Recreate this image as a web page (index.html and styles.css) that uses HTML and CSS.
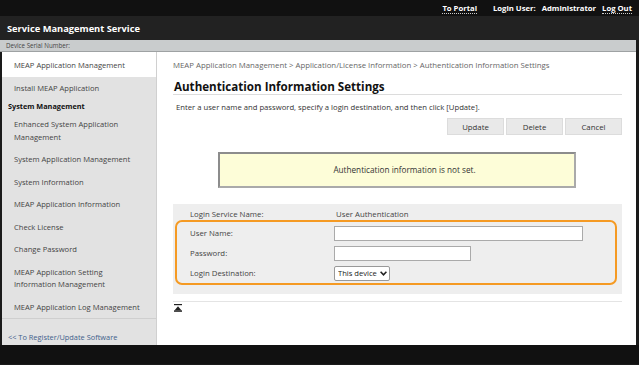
FILE: index.html
```html
<!DOCTYPE html>
<html lang="en">
<head>
<meta charset="UTF-8">
<title>Authentication Information Settings</title>
<link rel="stylesheet" href="styles.css">
</head>
<body>
<div class="top-bar">
    <a href="#" class="top-link">To Portal</a>
    <span class="login-user">Login User:</span>
    <span class="login-name">Administrator</span>
    <a href="#" class="top-link">Log Out</a>
</div>
<div class="title-bar">Service Management Service</div>
<div class="serial-bar">Device Serial Number:</div>
<div class="page">
    <nav class="side">
        <a href="#" class="side-item current">MEAP Application Management</a>
        <a href="#" class="side-item">Install MEAP Application</a>
        <div class="side-head">System Management</div>
        <a href="#" class="side-item">Enhanced System Application<br>Management</a>
        <a href="#" class="side-item">System Application Management</a>
        <a href="#" class="side-item">System Information</a>
        <a href="#" class="side-item">MEAP Application Information</a>
        <a href="#" class="side-item">Check License</a>
        <a href="#" class="side-item">Change Password</a>
        <a href="#" class="side-item">MEAP Application Setting<br>Information Management</a>
        <a href="#" class="side-item last">MEAP Application Log Management</a>
        <a href="#" class="side-register">&lt;&lt; To Register/Update Software</a>
    </nav>
    <main class="content">
        <div class="crumbs">MEAP Application Management &gt; Application/License Information &gt; Authentication Information Settings</div>
        <h1 class="heading">Authentication Information Settings</h1>
        <p class="desc">Enter a user name and password, specify a login destination, and then click [Update].</p>
        <div class="actions">
            <button type="button" class="btn">Update</button>
            <button type="button" class="btn">Delete</button>
            <button type="button" class="btn">Cancel</button>
        </div>
        <div class="notice">Authentication information is not set.</div>
        <div class="panel">
            <div class="row service">
                <span class="label">Login Service Name:</span>
                <span class="value">User Authentication</span>
            </div>
            <div class="highlight">
                <div class="row">
                    <label class="label" for="user-name">User Name:</label>
                    <input type="text" id="user-name" class="field wide">
                </div>
                <div class="row">
                    <label class="label" for="password">Password:</label>
                    <input type="password" id="password" class="field short">
                </div>
                <div class="row">
                    <label class="label" for="dest">Login Destination:</label>
                    <span class="select-wrap">
                        <select id="dest" class="select">
                            <option>This device</option>
                        </select>
                        <svg class="chev" width="7" height="5" viewBox="0 0 7 5"><path d="M0.6 0.8 L3.5 3.8 L6.4 0.8" fill="none" stroke="#222" stroke-width="1.6"/></svg>
                    </span>
                </div>
            </div>
        </div>
        <div class="page-top">
            <a href="#" class="to-top" title="Top">
                <svg width="8" height="8" viewBox="0 0 8 8"><rect x="0" y="0" width="8" height="1.2" fill="#222"/><path d="M4 2.2 L7.6 6.4 L0.4 6.4 Z" fill="#222"/><rect x="0" y="6.4" width="8" height="1.4" fill="#222"/></svg>
            </a>
        </div>
    </main>
</div>
<div class="footer"></div>
</body>
</html>
```

FILE: styles.css
```css
body {
    margin: 0;
    background: #1a1a1a;
    font-family: "Open Sans", "Noto Sans", Arial, sans-serif;
    color: #333;
}
a { color: inherit; text-decoration: none; }

.top-bar {
    height: 16px;
    background: #111;
    display: flex;
    justify-content: flex-end;
    align-items: center;
    gap: 6px;
    padding-right: 7px;
    color: #fff;
    font-size: 7.7px;
    font-weight: bold;
}
.top-link { border-bottom: 1px dotted #ccc; line-height: 10px; }
.login-user { margin-left: 10px; }

.title-bar {
    height: 24px;
    line-height: 26px;
    background: #222;
    color: #fff;
    font-size: 9.3px;
    font-weight: bold;
    padding-left: 7px;
}
.serial-bar {
    height: 11px;
    line-height: 12px;
    background: #c9cccd;
    border-bottom: 1px solid #9ea2a3;
    font-size: 6.2px;
    color: #444;
    padding-left: 6px;
    margin-right: 3px;
}

.page {
    display: flex;
    height: 293px;
    margin: 0 3px 0 2px;
    background: #fff;
}

.side {
    width: 154px;
    background: #e2e2e2;
    border-right: 1px solid #d0d0d0;
    display: flex;
    flex-direction: column;
    font-size: 7.6px;
    color: #444;
}
.side-item {
    padding: 5px 8px 5px 12px;
    line-height: 12.5px;
}
.side-item.current { background: #fff; padding-top: 7px; }
.side-item.last { border-bottom: 1px solid #cfcfcf; }
.side-head {
    padding: 0 6px;
    height: 14px;
    line-height: 14px;
    font-weight: bold;
    color: #111;
    font-size: 7.3px;
}
.side-register {
    margin-top: 13px;
    padding-left: 6px;
    color: #3f5f8c;
    font-size: 7.4px;
}

.content {
    flex: 1;
    padding: 8px 14px 0 16px;
    font-size: 7.8px;
}
.crumbs {
    color: #666;
    line-height: 11px;
}
.heading {
    margin: 6px 0 0 0;
    padding: 2px 0 0 1px;
    font-size: 11.6px;
    font-weight: bold;
    color: #111;
    line-height: 15px;
    border-bottom: 1px solid #dcdcdc;
}
.desc {
    margin: 7px 0 0 3px;
    line-height: 11px;
    font-size: 7.7px;
    color: #333;
}
.actions {
    display: flex;
    justify-content: flex-end;
    gap: 2px;
    margin-top: 5px;
}
.btn {
    width: 57px;
    height: 17px;
    background: #e9e9e9;
    border: 1px solid #dcdcdc;
    font-family: inherit;
    font-size: 7.8px;
    color: #333;
    padding: 0;
}
.notice {
    margin: 17px 46px 0 45px;
    height: 32px;
    line-height: 32px;
    padding-left: 15px;
    text-align: center;
    background: #fdfdd8;
    border: 2px solid #8c8c8c;
    border-right-color: #aaa;
    border-bottom-color: #aaa;
    font-size: 8.2px;
    color: #333;
}
.panel {
    margin-top: 16px;
    background: #eee;
    padding: 3px 5px 9px 2px;
}
.row {
    display: flex;
    align-items: center;
    height: 20px;
}
.row .label {
    width: 146px;
    padding-left: 15px;
    color: #444;
}
.row.service { height: 13px; }
.row.service .value { color: #444; }
.highlight {
    border: 2px solid #f59a23;
    border-radius: 7px;
    padding-top: 1px;
}
.highlight .row .label { width: 144px; padding-left: 13px; }
.field {
    height: 15px;
    box-sizing: border-box;
    border: 1px solid #aaa;
    background: #fff;
    padding: 0 3px;
    font-family: inherit;
    font-size: 7.6px;
}
.field.wide { width: 249px; }
.field.short { width: 137px; }
.select-wrap {
    position: relative;
    display: inline-block;
}
.select {
    appearance: none;
    -webkit-appearance: none;
    width: 56px;
    height: 15px;
    border: 1px solid #999;
    border-radius: 2px;
    background: #fff;
    font-family: inherit;
    font-size: 7.6px;
    color: #222;
    padding: 0 0 0 3px;
}
.chev {
    position: absolute;
    right: 3px;
    top: 5px;
}
.page-top {
    margin-top: 7px;
    border-top: 1px solid #e4e4e4;
    padding: 2px 0 0 1px;
}
.to-top { display: inline-block; }

.footer {
    height: 19px;
    background: #111;
}
```
